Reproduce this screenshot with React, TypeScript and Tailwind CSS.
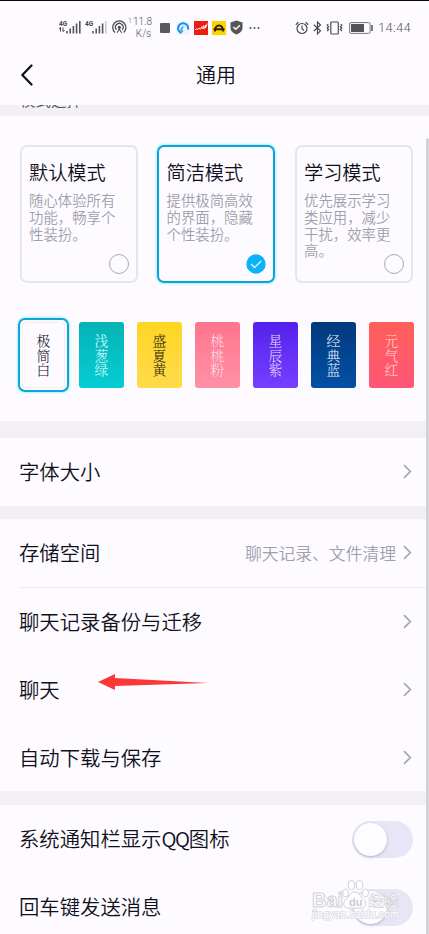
import clsx from "clsx";
import type { ReactNode } from "react";

const modes = [
  { title: "默认模式", lines: ["随心体验所有", "功能，畅享个", "性装扮。"] },
  { title: "简洁模式", lines: ["提供极简高效", "的界面，隐藏", "个性装扮。"], active: true },
  { title: "学习模式", lines: ["优先展示学习", "类应用，减少", "干扰，效率更", "高。"] },
];

const themes = [
  { name: "浅葱绿", style: "from-[#06b3b6] to-[#05cdd4] text-[#d5fbfb]" },
  { name: "盛夏黄", style: "from-[#ffd51f] to-[#ffdb4a] text-[#2b2410]" },
  { name: "桃桃粉", style: "from-[#ff748c] to-[#ff91a6] text-[#ffdce4]" },
  { name: "星辰紫", style: "from-[#5420ec] to-[#763eff] text-[#e0d4ff]" },
  { name: "经典蓝", style: "from-[#02397c] to-[#0450a6] text-[#e2eeff]" },
  { name: "元气红", style: "from-[#ff5f58] to-[#ff5677] text-[#ffd4d6]" },
];

function Signal({ data }: { data?: boolean }) {
  return (
    <svg width="23" height="17" viewBox="0 0 23 17" className="shrink-0">
      <text x="0" y="6.5" fontSize="6.5" fontWeight="700" fill="#444" fontFamily="Roboto">4G</text>
      {data && <path d="M1.500 8.500v4M0 10l1.500-1.700M4 8.500v4M5.500 11l-1.500 1.700" stroke="#444" strokeWidth="1" fill="none" />}
      <path d="M8 12v2.500M11.200 9.500v5M14.400 7v7.500M17.600 4.500v10" stroke="#555" strokeWidth="1.600" />
      <path d="M20.800 2v12.500" stroke={data ? "#555" : "#ccc"} strokeWidth="1.600" />
    </svg>
  );
}

function StatusBar() {
  return (
    <div className="flex h-[54px] items-center border-t border-[#08080a] pl-[59px] font-['Roboto'] text-[#555]">
      <Signal data />
      <div className="ml-[3px] flex">
        <Signal />
      </div>
      <svg width="17" height="17" viewBox="0 0 17 17" className="ml-[3px] shrink-0" fill="none" stroke="#4c4c4c" strokeWidth="1.300">
        <path d="M4 13.500a6.600 6.600 0 1 1 8.600 0M5.500 10.800a3.800 3.800 0 1 1 5.600 0" />
        <circle cx="8.300" cy="8.400" r="1" fill="#4c4c4c" />
        <path d="M6 13.800l2.300-3.500 2.300 3.500" strokeWidth="1.100" />
      </svg>
      <span className="-mt-3 w-[5px] text-[7px]">1</span>
      <div className="w-[21px] text-center text-[10px] leading-[11.500px] whitespace-nowrap">
        <div className="-ml-[2px]">11.8</div>
        <div>K/s</div>
      </div>
      <div className="ml-[6px] size-[10px] rounded-[1px] bg-[#59595b]" />
      <svg width="14" height="14" viewBox="0 0 14 14" className="ml-[6px] shrink-0">
        <rect width="14" height="14" rx="3" fill="#eef4fb" />
        <path d="M5.500 12A5 5 0 1 1 12 8.500" stroke="#1f8fee" strokeWidth="2.200" fill="none" />
        <path d="M5.500 12C3 8.500 5 4.500 9 5.500c-2.500.5-3 3.500-1.500 5z" fill="#38b5f5" />
      </svg>
      <svg width="14" height="14" viewBox="0 0 14 14" className="ml-[4px] shrink-0">
        <rect width="14" height="14" fill="#ee1c12" />
        <path d="M1 9l1.500-1.500 1 1.500L5 7l1.500 1.200L8 5.500l.5 2.500M9.500 4.500l.3 3.500 1.700-4v3l1.800-4.500" stroke="#fff" strokeWidth=".9" fill="none" />
      </svg>
      <svg width="14" height="14" viewBox="0 0 14 14" className="ml-[4px] shrink-0">
        <rect width="14" height="14" fill="#ffd500" />
        <path d="M3 10.500C2 2.500 12 2.500 11 10.500M1.500 8.300h11" stroke="#2c2400" strokeWidth="1.900" fill="none" />
      </svg>
      <svg width="13" height="15" viewBox="0 0 13 15" className="ml-[4px] shrink-0">
        <path d="M6.500.5l6 2v5c0 3.500-2.500 5.700-6 7-3.500-1.300-6-3.500-6-7v-5z" fill="#555658" />
        <path d="M3.300 7l2.400 2.300 4.200-4.100" stroke="#fff" strokeWidth="1.300" fill="none" />
      </svg>
      <svg width="11" height="4" viewBox="0 0 11 4" className="ml-[6px] shrink-0" fill="#555">
        <circle cx="1.500" cy="2" r="1" />
        <circle cx="5.500" cy="2" r="1" />
        <circle cx="9.500" cy="2" r="1" />
      </svg>
      <svg width="14" height="14" viewBox="0 0 14 14" className="ml-[35px] shrink-0" fill="none" stroke="#4c4c4c" strokeWidth="1.200">
        <circle cx="7" cy="7.500" r="5" />
        <path d="M7 4.500v3.200l2 1.800M.8 3.800l2.600-2.500M13.200 3.800l-2.600-2.500" />
      </svg>
      <svg width="9" height="14" viewBox="0 0 9 14" className="ml-[4px] shrink-0" fill="none" stroke="#4c4c4c" strokeWidth="1.200">
        <path d="M.8 3.800l6.700 6-3 3V1l3 3-6.700 6" />
      </svg>
      <svg width="17" height="14" viewBox="0 0 17 14" className="ml-[4px] shrink-0" fill="none" stroke="#4c4c4c" strokeWidth="1.200">
        <rect x="4.800" y="1" width="7.500" height="12" rx="1" />
        <path d="M2.200 3l-1 1.300 1.400 1.400-1.400 1.400 1.400 1.400L1.200 10M14.800 3l1 1.300-1.400 1.400 1.400 1.400-1.400 1.400 1.400 1.500" />
      </svg>
      <svg width="26" height="12" viewBox="0 0 26 12" className="ml-[6px] shrink-0">
        <rect x=".6" y=".6" width="20.500" height="10.800" rx="1.500" fill="none" stroke="#777" strokeWidth="1" />
        <rect x="2" y="2" width="13" height="8" fill="#555" />
        <path d="M23 3v6" stroke="#555" strokeWidth="1.500" />
      </svg>
      <span className="ml-[3px] text-[13px] tracking-[0.3px]">14:44</span>
    </div>
  );
}

function Arrow() {
  return (
    <svg width="9" height="15" viewBox="0 0 9 15" className="-mt-px shrink-0" fill="none" stroke="#a6a5b0" strokeWidth="1.700">
      <path d="M1 1.200l6.300 6.300L1 13.800" />
    </svg>
  );
}

function Row({ label, children, className }: { label: ReactNode; children: ReactNode; className?: string }) {
  return (
    <div className={clsx("flex h-[68px] shrink-0 items-center justify-between pl-[19px] text-[20.350px]", className)}>
      <span className="-mt-px leading-none whitespace-nowrap">{label}</span>
      {children}
    </div>
  );
}

function Toggle() {
  return (
    <div className="mr-4 flex h-[37px] w-[61px] items-center rounded-full bg-[#e7e5f6] pl-[2px]">
      <div className="size-[33px] rounded-full bg-[#fdfcff] shadow-[0_1px_3px_rgba(90,80,120,0.35)]" />
    </div>
  );
}

function Watermark() {
  return (
    <svg width="92" height="44" viewBox="0 0 92 44" className="absolute top-[879px] left-[311px]">
      <g fill="#fff" stroke="#d2d0d8" strokeWidth="1" strokeLinejoin="round">
        <text x="1" y="28" fontSize="20" fontWeight="700" fontFamily="Liberation Sans" textLength="31" lengthAdjust="spacingAndGlyphs">Bai</text>
        <ellipse cx="34.500" cy="14" rx="3" ry="4" />
        <ellipse cx="40.500" cy="6" rx="3.200" ry="4.500" />
        <ellipse cx="48.500" cy="6" rx="3.200" ry="4.500" />
        <ellipse cx="54.500" cy="14" rx="3" ry="4" />
        <path d="M44 13c5 0 5 5 8.500 7.500 4 3 2 8.500-2 8.500H37c-4.500 0-6-5-2-8.500 3.500-3 4-7.500 9-7.500z" />
        <text x="38" y="26.500" fontSize="11" fontWeight="700" fontFamily="Liberation Sans" fill="#c9c7d2" stroke="none">du</text>
        <text x="57.500" y="27" fontSize="15" fontWeight="700" fontFamily="Noto Sans CJK SC" strokeWidth=".7">经验</text>
        <text x="1" y="39" fontSize="10.500" fontFamily="Liberation Sans" textLength="87" paintOrder="stroke" stroke="#d9d7df" strokeWidth="1.300">jingyan.baidu.com</text>
      </g>
    </svg>
  );
}

export default function App() {
  return (
    <div className="relative h-[934px] w-[429px] overflow-hidden bg-[#fdfbff] font-['Noto_Sans_CJK_SC',sans-serif] font-[350] text-[#10101c]">
      <StatusBar />

      {/* title bar */}
      <header className="flex h-[51px] items-center pb-[9px] pl-[20px]">
        <svg width="14" height="22" viewBox="0 0 14 22" fill="none" stroke="#10101c" strokeWidth="2.200" strokeLinecap="round" strokeLinejoin="round">
          <path d="M11.500 1.500L2.300 11l9.200 9.500" />
        </svg>
        <h1 className="ml-[162px] text-[20px] leading-none">通用</h1>
      </header>

      {/* section caption, scrolled under the title bar */}
      <div className="flex h-[11px] items-start overflow-hidden bg-[#f2eff6] pl-5">
        <span className="-mt-[14px] text-[15.500px] leading-[16px] text-[#55545f]">模式选择</span>
      </div>

      {/* mode cards */}
      <section className="flex h-[305px] flex-col">
        <div className="mt-[29px] flex gap-[19.500px] pl-[19.500px]">
          {modes.map((mode) => (
            <div
              key={mode.title}
              className={clsx(
                "flex h-[138px] w-[118px] flex-col rounded-[7px] border-2 pt-[15px] pl-[7.500px]",
                mode.active ? "border-[#0ba5d8] shadow-[0_0_3px_#5fe0ff]" : "border-[#e6e4ee]",
              )}
            >
              <h2 className="text-[19.200px] leading-[20px]">{mode.title}</h2>
              <p className="mt-[10px] h-[56px] text-[14.400px] leading-[16.800px] whitespace-nowrap text-[#a09fac]">
                {mode.lines.map((line) => (
                  <span key={line} className="block">{line}</span>
                ))}
              </p>
              <div className="mt-[6px] mr-[7px] flex justify-end">
                {mode.active ? (
                  <svg width="20" height="20" viewBox="0 0 20 20">
                    <circle cx="10" cy="10" r="9.700" fill="#0bb2f8" />
                    <path d="M5 10l3.600 3.500 6.600-6.500" stroke="#d9f6ff" strokeWidth="1.300" fill="none" />
                  </svg>
                ) : (
                  <div className="size-[20px] rounded-full border-[1.500px] border-[#aaa9b2]" />
                )}
              </div>
            </div>
          ))}
        </div>

        {/* theme swatches */}
        <div className="mt-[35px] flex items-center pl-[18px] font-['Noto_Serif_CJK_SC','Noto_Sans_CJK_SC',serif] text-[13.800px] leading-[14.400px]">
          <div className="mr-[10px] h-[74px] w-[51px] rounded-[7px] border-[2.500px] border-[#0ba5dc] p-[2px] shadow-[0_0_3px_#5fe0ff]">
            <div className="flex h-full items-center justify-center rounded-[3px] border border-[#f0eef5]">
              <span className="w-[1em] break-all">极简白</span>
            </div>
          </div>
          <div className="flex gap-[13px]">
            {themes.map((theme) => (
              <div key={theme.name} className={clsx("flex h-[66px] w-[45px] items-center justify-center rounded-[3px] bg-linear-to-b", theme.style)}>
                <span className="w-[1em] break-all">{theme.name}</span>
              </div>
            ))}
          </div>
        </div>
      </section>

      <div className="h-[17px] bg-[#f2eff6]" />
      <Row label="字体大小" className="pr-[17px]"><Arrow /></Row>
      <div className="h-[13px] bg-[#f2eff6]" />

      <Row label="存储空间" className="pr-[17px]">
        <div className="flex items-center gap-[7px] text-[16.800px] leading-none text-[#a09fac]">
          <span>聊天记录、文件清理</span>
          <Arrow />
        </div>
      </Row>
      <div className="ml-5 h-px bg-[#ecebf0]" />
      <Row label="聊天记录备份与迁移" className="pr-[17px]"><Arrow /></Row>
      <Row label="聊天" className="pr-[17px]"><Arrow /></Row>
      <Row label="自动下载与保存" className="pr-[17px]"><Arrow /></Row>
      <div className="-mt-px h-[14px] bg-[#f2eff6]" />

      <Row label={<>系统通知栏显示<span className="tracking-[-1.300px]">QQ</span>图标</>}><Toggle /></Row>
      <Row label="回车键发送消息"><Toggle /></Row>

      {/* scrollbar */}
      <div className="absolute top-[138px] right-0 h-[796px] w-[3px] rounded-t-sm bg-[#d3d2d6]" />

      {/* pointer */}
      <svg width="112" height="18" viewBox="0 0 112 18" className="absolute top-[673px] left-[97px]" fill="#fb3738">
        <path d="M1 9L18 1v4l93 5-93 3v4z" />
      </svg>

      <Watermark />
    </div>
  );
}
